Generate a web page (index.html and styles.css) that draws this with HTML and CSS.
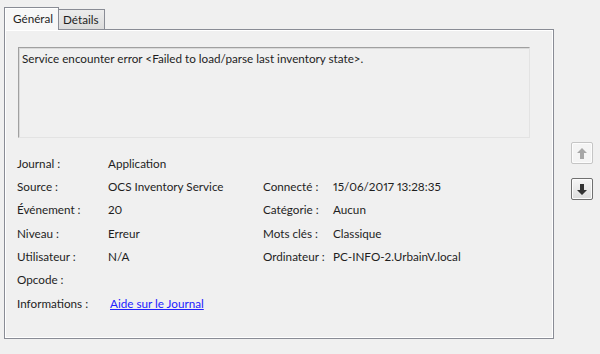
FILE: index.html
```html
<!DOCTYPE html>
<html lang="fr">
<head>
    <meta charset="UTF-8">
    <title>Propriétés de l'événement</title>
    <link rel="stylesheet" href="styles.css">
</head>
<body>
    <div class="window">
        <div class="tabs-area">
            <div class="tab-strip">
                <div class="tab tab-active">Général</div>
                <div class="tab">Détails</div>
            </div>

            <div class="tab-panel">
                <div class="message-box">Service encounter error &lt;Failed to load/parse last inventory state&gt;.</div>

                <div class="details">
                    <span class="label">Journal :</span>
                    <span class="value wide">Application</span>

                    <span class="label">Source :</span>
                    <span class="value">OCS Inventory Service</span>
                    <span class="label">Connecté :</span>
                    <span class="value">15/06/2017 13:28:35</span>

                    <span class="label">Événement :</span>
                    <span class="value">20</span>
                    <span class="label">Catégorie :</span>
                    <span class="value">Aucun</span>

                    <span class="label">Niveau :</span>
                    <span class="value">Erreur</span>
                    <span class="label">Mots clés :</span>
                    <span class="value">Classique</span>

                    <span class="label">Utilisateur :</span>
                    <span class="value">N/A</span>
                    <span class="label">Ordinateur :</span>
                    <span class="value">PC-INFO-2.UrbainV.local</span>

                    <span class="label">Opcode :</span>
                    <span class="value wide"></span>

                    <span class="label">Informations :</span>
                    <span class="value wide"><a class="link" href="#">Aide sur le Journal</a></span>
                </div>
            </div>
        </div>

        <div class="nav-buttons">
            <button class="nav-btn" disabled>
                <svg width="10" height="11" viewBox="0 0 10 11"><path d="M5 0 L10 5 H7 V11 H3 V5 H0 Z" fill="#a6a6a6"/></svg>
            </button>
            <button class="nav-btn">
                <svg width="10" height="11" viewBox="0 0 10 11"><path d="M3 0 H7 V6 H10 L5 11 L0 6 H3 Z" fill="#333"/></svg>
            </button>
        </div>
    </div>
</body>
</html>
```

FILE: styles.css
```css
body {
    margin: 0;
    background-color: #f0f0f0;
    font-family: 'Lato', sans-serif;
    font-size: 11.7px;
    font-variant-numeric: proportional-nums;
    color: #1e1e1e;
}

.window {
    display: flex;
    padding: 7px 0 0 4px;
}

.tabs-area {
    width: 550px;
}

.tab-strip {
    display: flex;
    align-items: flex-end;
    height: 22px;
}

.tab {
    box-sizing: border-box;
    height: 20px;
    padding: 0 5px 0 4px;
    line-height: 19px;
    border: 1px solid #898c95;
    border-bottom: none;
    border-left: none;
    background: linear-gradient(#ececec, #dcdcdc);
}

.tab-active {
    position: relative;
    z-index: 1;
    height: 23px;
    width: 55px;
    margin-bottom: -1px;
    padding-left: 8px;
    line-height: 20px;
    border-left: 1px solid #898c95;
    border-right: 1px solid #898c95;
    background: #f7f7f7;
    box-shadow: inset 1px 1px #fff;
}

.tab-panel {
    box-sizing: border-box;
    height: 310px;
    border: 1px solid #898c95;
    box-shadow: inset 1px 1px #fff, inset -1px -1px #fff;
    background-color: #f0f0f0;
    padding: 17px 23px 0 13px;
}

.message-box {
    box-sizing: border-box;
    height: 91px;
    padding: 2px 3px;
    border: 1px solid #a0a0a0;
    border-right-color: #e3e3e3;
    border-bottom-color: #e3e3e3;
    box-shadow: inset 1px 1px #dadada;
    line-height: 16px;
}

.details {
    display: grid;
    grid-template-columns: 91px 155px 70px auto;
    grid-auto-rows: 23.33px;
    align-items: center;
    margin-top: 13px;
    margin-left: -1px;
}

.wide {
    grid-column: span 3;
}

.link {
    color: #2222ff;
    margin-left: 2px;
}

.nav-buttons {
    display: flex;
    flex-direction: column;
    gap: 14px;
    padding: 135px 0 0 17px;
}

.nav-btn {
    width: 22px;
    height: 22px;
    padding: 0;
    display: flex;
    align-items: center;
    justify-content: center;
    border: 1px solid #707070;
    border-radius: 2px;
    background: linear-gradient(#f6f6f6, #dddddd);
    box-shadow: inset 0 0 0 1px #fcfcfc;
}

.nav-btn:disabled {
    border-color: #c5c5c5;
    background: #f4f4f4;
}
```
